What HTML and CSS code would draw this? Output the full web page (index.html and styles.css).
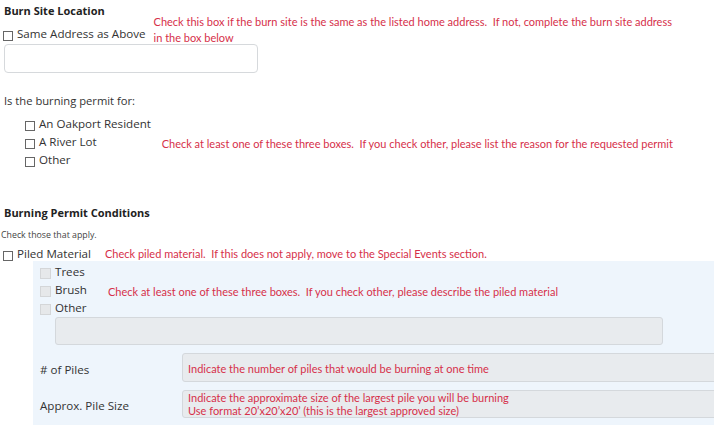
FILE: index.html
```html
<!DOCTYPE html>
<html>
<head>
<meta charset="utf-8">
<link rel="stylesheet" href="styles.css">
</head>
<body>
<div class="page">
  <h3 class="title t1">Burn Site Location</h3>
  <div class="same-row">
    <label class="check main"><span class="box"></span>Same Address as Above</label>
    <span class="note note-same">Check this box if the burn site is the same as the listed home address.&nbsp; If not, complete the burn site address<br>in the box below</span>
  </div>
  <div class="addr-input"></div>

  <p class="question">Is the burning permit for:</p>
  <div class="options">
    <label class="check main"><span class="box"></span>An Oakport Resident</label>
    <div class="opt-row">
      <label class="check main"><span class="box"></span>A River Lot</label>
      <span class="note row-note note-opt">Check at least one of these three boxes.&nbsp; If you check other, please list the reason for the requested permit</span>
    </div>
    <label class="check main"><span class="box"></span>Other</label>
  </div>

  <h3 class="title t2">Burning Permit Conditions</h3>
  <p class="small">Check those that apply.</p>
  <div class="piled-row">
    <label class="check main"><span class="box"></span>Piled Material</label>
    <span class="note note-piled">Check piled material.&nbsp; If this does not apply, move to the Special Events section.</span>
  </div>

  <div class="panel">
    <label class="check sub"><span class="box grey"></span>Trees</label>
    <div class="opt-row">
      <label class="check sub"><span class="box grey"></span>Brush</label>
      <span class="note row-note note-brush">Check at least one of these three boxes.&nbsp; If you check other, please describe the piled material</span>
    </div>
    <label class="check sub"><span class="box grey"></span>Other</label>
    <div class="other-area"></div>
    <div class="field-row">
      <span class="field-label">#&nbsp;of Piles</span>
      <div class="field-input one"><span class="note">Indicate the number of piles that would be burning at one time</span></div>
    </div>
    <div class="field-row">
      <span class="field-label">Approx. Pile Size</span>
      <div class="field-input two"><span class="note">Indicate the approximate size of the largest pile you will be burning<br>Use format 20’x20’x20’ (this is the largest approved size)</span></div>
    </div>
  </div>
</div>
</body>
</html>
```
FILE: styles.css
```css
* { box-sizing: border-box; }
html, body { margin: 0; padding: 0; background: #fff; }
body {
  font-family: "Open Sans", "Noto Sans", sans-serif;
  color: #333;
  width: 714px;
  height: 425px;
  overflow: hidden;
}
.page { padding: 0 0 0 4px; }
.title {
  margin: 0;
  font-size: 11px;
  font-weight: 700;
  color: #222;
  line-height: 14px;
}
.t1 { padding-top: 4px; }
.t2 { margin-top: 37px; }
.note {
  font-family: "Lato", "Liberation Sans", sans-serif;
  color: #d6304a;
  font-size: 11px;
  line-height: 16px;
  white-space: nowrap;
}
.check {
  display: flex;
  align-items: center;
  line-height: 18px;
  height: 18px;
  white-space: nowrap;
}
.main { font-size: 11.6px; color: #333; }
.box {
  width: 10px;
  height: 10px;
  border: 1px solid #666;
  background: #fff;
  margin-right: 4px;
  margin-top: 3px;
  flex: none;
}
.box.grey { border-color: #d4d6d8; background: #e6e8ea; width: 11px; height: 11px; }
.same-row {
  display: flex;
  align-items: flex-start;
  margin-left: -1px;
  margin-top: -4px;
  height: 30px;
}
.same-row .check { margin-top: 11px; }
.note-same { margin-left: 8px; }
.addr-input {
  width: 254px;
  height: 29px;
  border: 1px solid #d6d9dc;
  border-radius: 4px;
}
.question {
  margin: 21px 0 0 0;
  font-size: 11.2px;
  line-height: 14px;
  color: #333;
}
.options {
  margin: 7px 0 0 21px;
  display: flex;
  flex-direction: column;
}
.opt-row { display: flex; align-items: flex-start; height: 18px; }
.row-note { line-height: 14px; padding-top: 4px; }
.note-opt { margin-left: 65px; }
.small {
  margin: 9px 0 0 -3px;
  font-size: 8.8px;
  line-height: 12px;
  color: #444;
}
.piled-row { display: flex; align-items: center; margin-top: 4px; margin-left: -1px; }
.note-piled { margin-left: 14px; }
.panel {
  margin-left: 29px;
  margin-top: -2px;
  background: #eef5fc;
  padding: 2px 0 10px 7px;
  width: 700px;
}
.sub { font-size: 11.6px; color: #333; }
.note-brush { margin-left: 21px; }
.other-area {
  margin-left: 15px;
  width: 608px;
  height: 28px;
  background: #e8ebee;
  border: 1px solid #d4d8dc;
  border-radius: 3px;
}
.field-row {
  display: flex;
  align-items: center;
  margin-top: 8px;
}
.field-label {
  width: 142px;
  flex: none;
  font-size: 11.6px;
  color: #333;
  padding-top: 3px;
}
.field-input {
  flex: 1;
  background: #e8ebee;
  border: 1px solid #d4d8dc;
  border-radius: 3px;
  padding-left: 5px;
}
.field-input.one { height: 29px; display: flex; align-items: center; padding-top: 3px; }
.field-input.two { height: 28px; display: flex; align-items: center; }
.field-input.two .note { line-height: 13px; }
```
